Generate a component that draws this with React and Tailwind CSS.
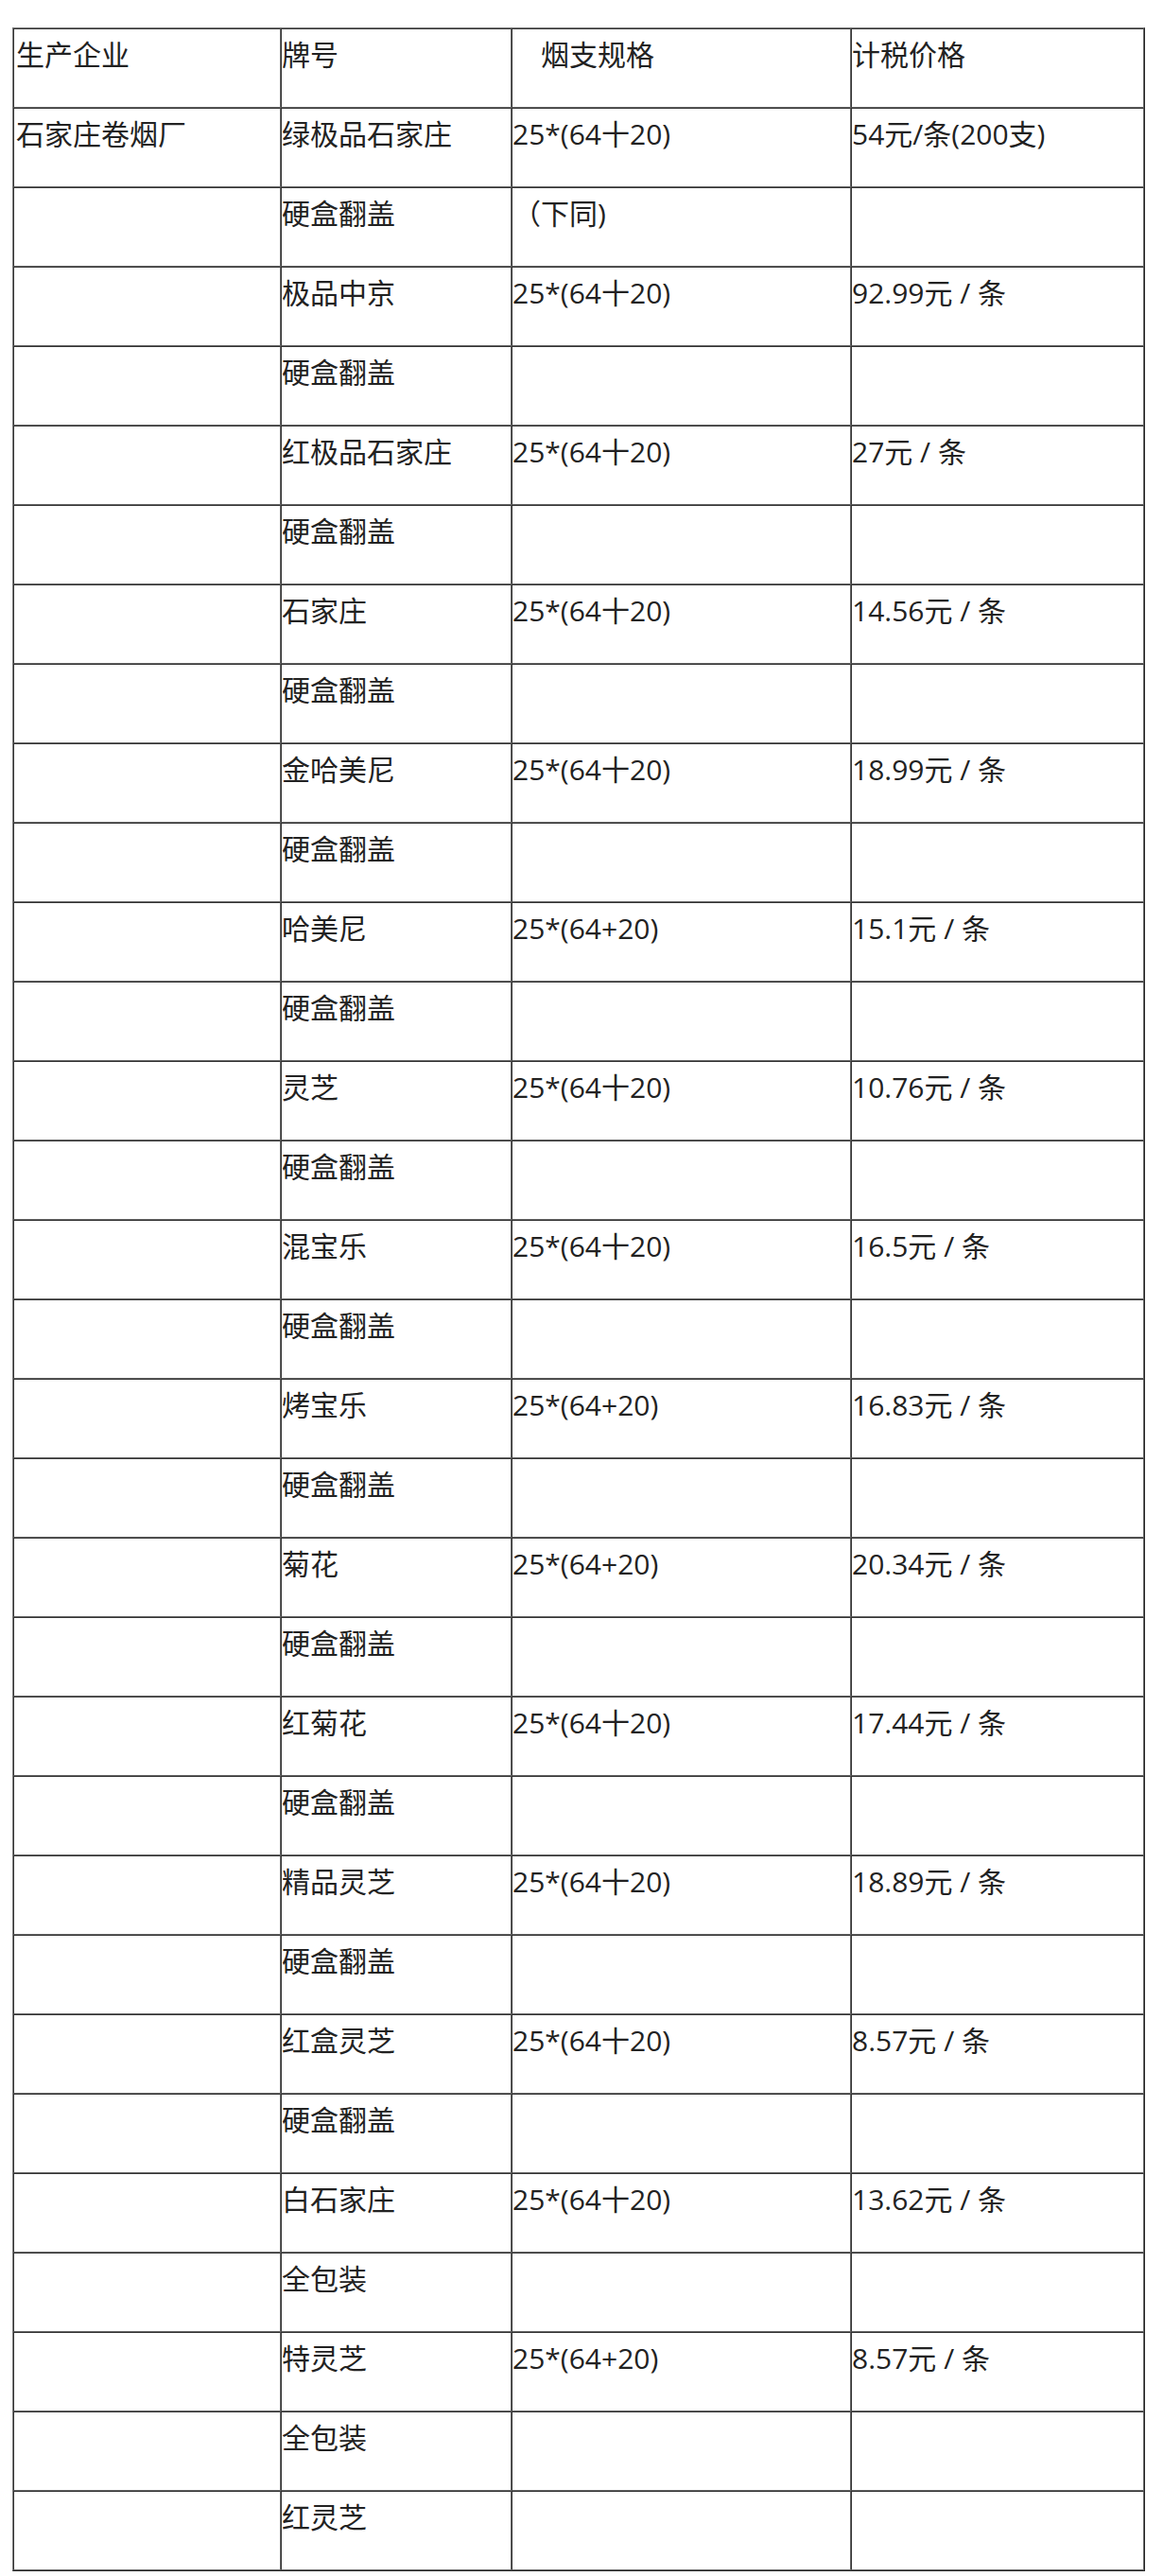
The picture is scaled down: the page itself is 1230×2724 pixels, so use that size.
// Cigarette tax price table (石家庄卷烟厂)
const rows = [
  ['生产企业', '牌号', '\u3000烟支规格', '计税价格'],
  ['石家庄卷烟厂', '绿极品石家庄', '25*(64十20)', '54元/条(200支)'],
  ['', '硬盒翻盖', '（下同)', ''],
  ['', '极品中京', '25*(64十20)', '92.99元 / 条'],
  ['', '硬盒翻盖', '', ''],
  ['', '红极品石家庄', '25*(64十20)', '27元 / 条'],
  ['', '硬盒翻盖', '', ''],
  ['', '石家庄', '25*(64十20)', '14.56元 / 条'],
  ['', '硬盒翻盖', '', ''],
  ['', '金哈美尼', '25*(64十20)', '18.99元 / 条'],
  ['', '硬盒翻盖', '', ''],
  ['', '哈美尼', '25*(64+20)', '15.1元 / 条'],
  ['', '硬盒翻盖', '', ''],
  ['', '灵芝', '25*(64十20)', '10.76元 / 条'],
  ['', '硬盒翻盖', '', ''],
  ['', '混宝乐', '25*(64十20)', '16.5元 / 条'],
  ['', '硬盒翻盖', '', ''],
  ['', '烤宝乐', '25*(64+20)', '16.83元 / 条'],
  ['', '硬盒翻盖', '', ''],
  ['', '菊花', '25*(64+20)', '20.34元 / 条'],
  ['', '硬盒翻盖', '', ''],
  ['', '红菊花', '25*(64十20)', '17.44元 / 条'],
  ['', '硬盒翻盖', '', ''],
  ['', '精品灵芝', '25*(64十20)', '18.89元 / 条'],
  ['', '硬盒翻盖', '', ''],
  ['', '红盒灵芝', '25*(64十20)', '8.57元 / 条'],
  ['', '硬盒翻盖', '', ''],
  ['', '白石家庄', '25*(64十20)', '13.62元 / 条'],
  ['', '全包装', '', ''],
  ['', '特灵芝', '25*(64+20)', '8.57元 / 条'],
  ['', '全包装', '', ''],
  ['', '红灵芝', '', ''],
]

function Cell({ children, first }) {
  return (
    <div
      className={`h-[84px] border border-t-[#333333] border-l-[#333333] border-b-[#666666] border-r-[#666666] pt-[12px] leading-[30px] whitespace-pre overflow-hidden ${first ? 'pl-[2px]' : 'pl-0'}`}
    >
      {children}
    </div>
  )
}

export default function App() {
  return (
    <div className="min-h-screen bg-white pt-[29px] pl-[13px]">
      <div
        className="w-[1198px] border border-t-[#7a7a7a] border-l-[#7a7a7a] border-b-[#262626] border-r-[#262626] text-[30px] text-[#222222]"
        style={{ fontFamily: '"Open Sans", "Noto Sans CJK SC", sans-serif' }}
      >
        <div className="grid grid-cols-[283px_244px_359px_310px]">
          {rows.map((r, i) =>
            r.map((c, j) => (
              <Cell key={`${i}-${j}`} first={j === 0}>
                {c}
              </Cell>
            ))
          )}
        </div>
      </div>
    </div>
  )
}
